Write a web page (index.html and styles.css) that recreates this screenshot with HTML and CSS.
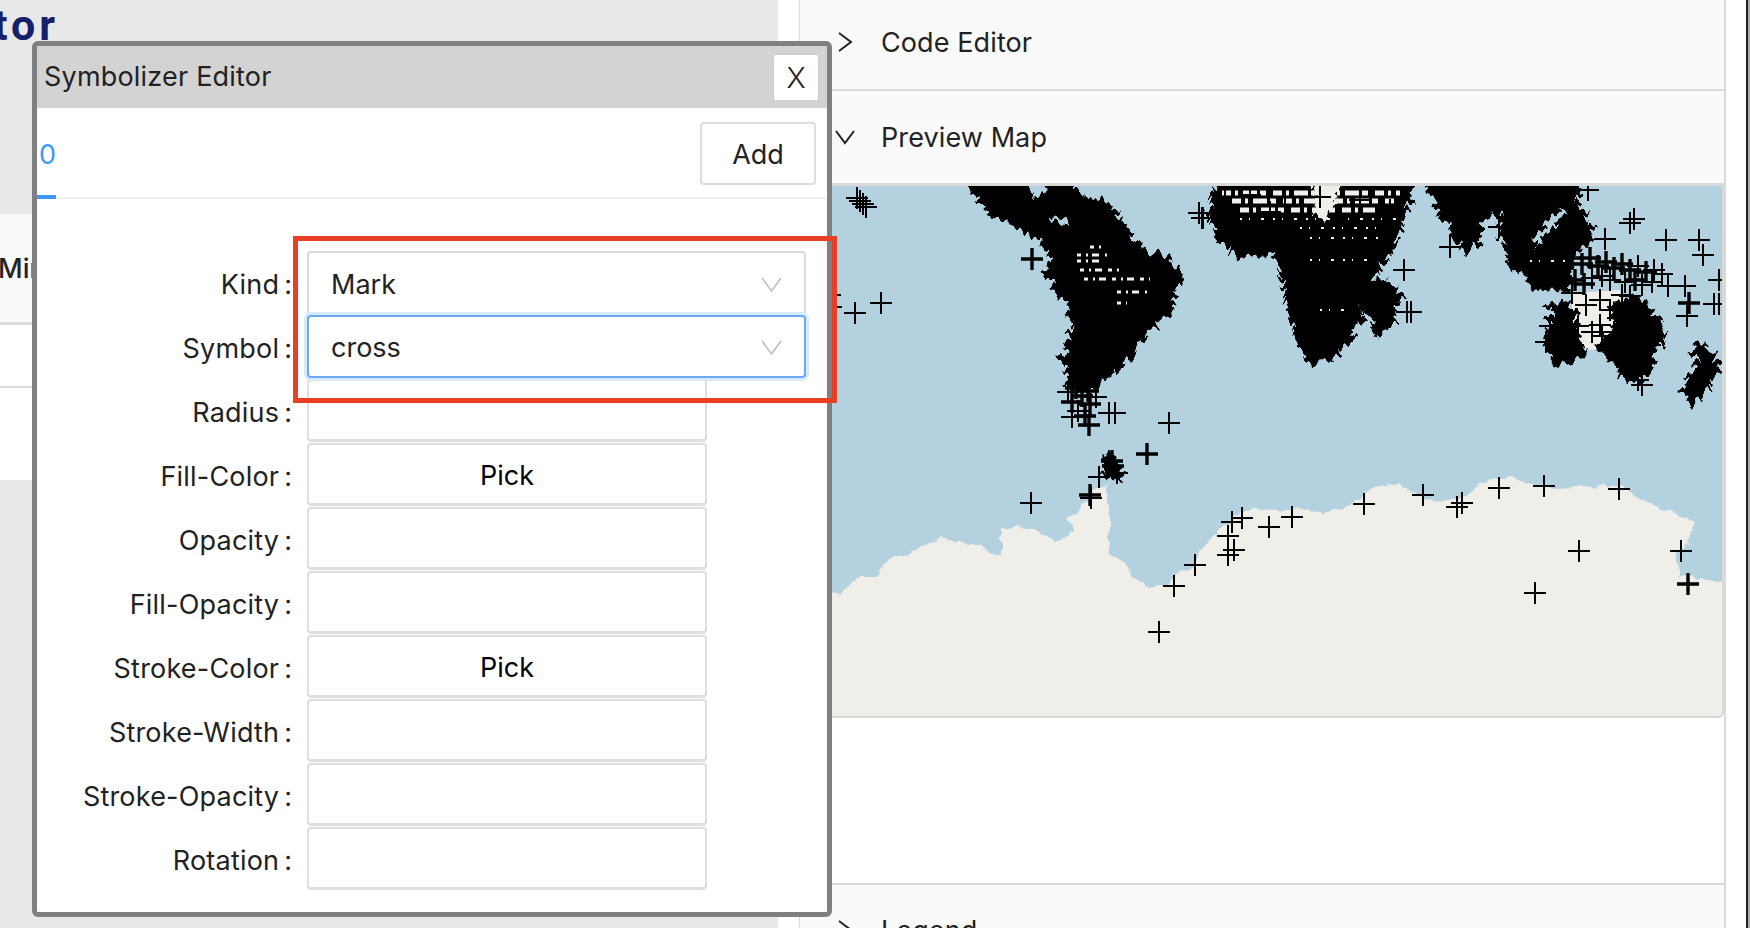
FILE: index.html
```html
<!DOCTYPE html>
<html lang="en">
<head>
<meta charset="utf-8">
<title>Symbolizer Editor</title>
<link rel="stylesheet" href="styles.css">
</head>
<body>
<div class="page">
  <div class="left">
    <div class="brand"><span class="brand-text">tor</span></div>
    <div class="thead"><span class="th">Min</span></div>
    <div class="trow"></div>
    <div class="trow-empty"></div>
    <div class="left-rest"></div>
  </div>
  <div class="gutter"></div>
  <div class="panel">
    <div class="head head-first">
      <svg class="chev" width="20" height="20" viewBox="0 0 20 20"><path d="M4 1l12 9L4 19"/></svg>
      <span>Code Editor</span>
    </div>
    <div class="head head-open">
      <svg class="chev" width="20" height="20" viewBox="0 0 20 20"><path d="M1 4l9 12 9-12"/></svg>
      <span>Preview Map</span>
    </div>
    <div class="map">
      <svg class="map-svg" width="922" height="531" viewBox="800 186 922 531">
        <defs>
          <path id="c" d="M0-11V11M-11 0H11"/>
          <path id="t" d="M0-11V11M-11 0H11" stroke-width="3.4"/>
          <filter id="rough" x="-2%" y="-5%" width="104%" height="110%">
            <feTurbulence type="fractalNoise" baseFrequency="0.07" numOctaves="3" seed="4"/>
            <feDisplacementMap in="SourceGraphic" scale="11" xChannelSelector="R" yChannelSelector="G"/>
          </filter>
          <filter id="jag" filterUnits="userSpaceOnUse" x="780" y="150" width="960" height="600" color-interpolation-filters="sRGB">
            <feTurbulence type="fractalNoise" baseFrequency="0.01 0.2" numOctaves="1" seed="7" result="nx"/>
            <feColorMatrix in="nx" type="matrix" values="1 0 0 0 0  0 0 0 0 .5  0 0 0 0 .5  0 0 0 0 1" result="mx"/>
            <feDisplacementMap in="SourceGraphic" in2="mx" scale="26" xChannelSelector="R" yChannelSelector="G" result="a"/>
            <feTurbulence type="fractalNoise" baseFrequency="0.2 0.01" numOctaves="1" seed="11" result="ny"/>
            <feColorMatrix in="ny" type="matrix" values="1 0 0 0 0  0 0 0 0 .5  0 0 0 0 .5  0 0 0 0 1" result="my"/>
            <feDisplacementMap in="a" in2="my" scale="20" xChannelSelector="G" yChannelSelector="R"/>
          </filter>
        </defs>
        <rect class="ocean" x="800" y="186" width="922" height="531"/>
        <path class="land land-coast" d="M790 585L832 592 844 595 859 577 876 577 888 558 915 553 939 538 980 547 989 555 1001 553 1001 528 1016 526 1039 533 1054 542 1075 530 1069 518 1084 503 1108 483 1108 553 1122 563 1140 583 1164 587 1194 563 1200 547 1217 533 1240 512 1262 508 1290 510 1324 512 1354 502 1380 487 1398 483 1413 492 1430 500 1449 503 1472 490 1490 480 1508 478 1535 486 1561 488 1603 485 1620 488 1638 498 1674 512 1697 523 1686 543 1677 553 1679 577 1698 578 1740 583V740H790Z"/>
        <path class="land" d="M1572 293L1620 290 1625 345 1590 350 1572 340Z"/>
        <g class="continents">
          <path class="mass" d="M968 165H1070V190L1072 194 1083 199 1107 207 1115 215 1118 225 1128 239 1140 252 1158 257 1171 267 1179 278 1175 287 1171 295 1170 307 1158 320 1148 331 1138 341 1125 358 1115 370 1103 378 1095 385H1072L1069 377 1067 360 1072 337 1075 313 1062 295 1049 270 1055 247 1039 235 1019 225 995 215 982 202Z"/>
          <path class="mass" d="M1225 165H1410V190L1400 223 1386 253 1372 277 1358 320 1347 340 1330 358 1312 360 1302 345 1295 327 1288 293 1284 270 1274 250 1242 255 1221 236 1212 217Z"/>
          <path class="mass" d="M1425 165H1578V188L1572 200 1587 223 1589 240 1572 250 1566 288 1533 285 1512 261 1505 240 1502 213 1491 210 1477 220 1477 237 1467 248 1453 230 1442 210Z"/>
          <path class="mass" d="M1386 283L1398 297 1389 321 1379 331 1370 313 1373 289Z"/>
          <path class="mass" d="M1632 300L1651 313 1661 333 1654 355 1639 380 1627 375 1612 358 1600 347 1616 333 1615 305Z"/>
          <path class="mass" d="M1553 309L1570 305 1575 330 1582 350 1570 358 1561 360 1548 347 1553 327Z"/>
          <path class="mass" d="M1705 347L1717 367 1705 385 1692 400 1685 390 1700 370 1697 353Z"/>
          <path class="mass mass-small" d="M1105 458L1112 455 1120 470 1118 478 1105 475Z"/>
          <path class="sea" d="M1023 165H1043V187L1040 195 1030 198ZM1056 215L1070 220 1068 228 1060 224ZM1561 208L1564 218 1550 232 1537 247 1537 238 1550 220Z"/>
          <path class="blob" d="M1312 175H1336L1334 205 1325 220 1315 212Z"/>
        </g>
        <g class="speck">
          <path d="M1090 247H1103"/><path d="M1077 255H1107"/><path d="M1077 261H1104"/><path d="M1080 270H1120"/>
          <path d="M1084 279H1150"/><path d="M1117 292H1147"/><path d="M1117 303H1127"/>
          <path class="speck-wide" d="M1222 193H1400"/><path class="speck-wide" d="M1232 201H1396"/><path class="speck-wide" d="M1240 210H1375"/>
          <path class="speck-fine" d="M1240 219H1400"/><path class="speck-fine" d="M1300 228H1380"/><path class="speck-fine" d="M1310 238H1380"/>
          <path class="speck-fine" d="M1310 260H1370"/><path class="speck-fine" d="M1320 310H1350"/>
          <path class="speck-fine" d="M1530 261H1570"/>
        </g>
        <g class="cross">
          <use href="#c" x="855" y="313"/><use href="#c" x="881" y="303"/><use href="#c" x="830" y="295"/><use href="#c" x="831" y="307"/>
          <use href="#t" x="1032" y="259"/><use href="#c" x="1109" y="413"/><use href="#c" x="1115" y="413"/><use href="#t" x="1089" y="425"/>
          <use href="#c" x="1169" y="423"/><use href="#t" x="1147" y="454"/>
          <use href="#c" x="857" y="198"/><use href="#c" x="860" y="201"/><use href="#c" x="863" y="204"/><use href="#c" x="866" y="207"/>
          <use href="#c" x="1199" y="213"/><use href="#c" x="1202" y="218"/>
          <use href="#t" x="1076" y="388"/><use href="#t" x="1088" y="391"/><use href="#t" x="1082" y="396"/><use href="#t" x="1072" y="402"/>
          <use href="#t" x="1090" y="404"/><use href="#c" x="1078" y="411"/><use href="#t" x="1085" y="416"/><use href="#c" x="1072" y="417"/>
          <use href="#c" x="1096" y="397"/><use href="#c" x="1068" y="392"/>
          <use href="#c" x="1031" y="503"/><use href="#c" x="1099" y="477"/><use href="#t" x="1090" y="495"/><use href="#c" x="1091" y="498"/>
          <use href="#t" x="1112" y="461"/><use href="#t" x="1113" y="466"/><use href="#c" x="1117" y="473"/>
          <use href="#c" x="1174" y="586"/><use href="#c" x="1159" y="632"/><use href="#c" x="1195" y="565"/><use href="#c" x="1228" y="555"/>
          <use href="#c" x="1228" y="536"/><use href="#c" x="1234" y="550"/><use href="#c" x="1232" y="522"/><use href="#c" x="1242" y="518"/>
          <use href="#c" x="1269" y="527"/><use href="#c" x="1292" y="517"/><use href="#c" x="1364" y="504"/><use href="#c" x="1423" y="495"/>
          <use href="#c" x="1457" y="507"/><use href="#c" x="1462" y="503"/><use href="#c" x="1499" y="488"/><use href="#c" x="1544" y="486"/>
          <use href="#c" x="1619" y="489"/><use href="#c" x="1579" y="551"/><use href="#c" x="1535" y="593"/><use href="#c" x="1681" y="551"/>
          <use href="#t" x="1688" y="584"/>
          <use href="#c" x="1404" y="270"/><use href="#c" x="1407" y="312"/><use href="#c" x="1411" y="312"/>
          <use href="#c" x="1634" y="219"/><use href="#c" x="1630" y="223"/><use href="#c" x="1605" y="239"/><use href="#c" x="1666" y="240"/>
          <use href="#c" x="1699" y="240"/><use href="#c" x="1703" y="255"/><use href="#c" x="1685" y="286"/><use href="#t" x="1689" y="303"/>
          <use href="#c" x="1687" y="316"/><use href="#c" x="1719" y="280"/><use href="#c" x="1714" y="304"/><use href="#c" x="1719" y="304"/>
          <use href="#c" x="1499" y="227"/><use href="#c" x="1450" y="247"/><use href="#c" x="1588" y="190"/><use href="#c" x="1203" y="218"/>
          <use href="#t" x="1572" y="258"/><use href="#t" x="1582" y="264"/><use href="#t" x="1590" y="258"/><use href="#t" x="1598" y="266"/>
          <use href="#t" x="1606" y="262"/><use href="#t" x="1614" y="268"/><use href="#t" x="1622" y="264"/><use href="#t" x="1630" y="270"/>
          <use href="#c" x="1638" y="266"/><use href="#t" x="1646" y="272"/><use href="#c" x="1654" y="270"/><use href="#c" x="1662" y="274"/>
          <use href="#c" x="1668" y="286"/><use href="#t" x="1575" y="280"/><use href="#t" x="1584" y="284"/><use href="#c" x="1592" y="278"/>
          <use href="#c" x="1625" y="282"/><use href="#t" x="1635" y="280"/><use href="#c" x="1642" y="285"/><use href="#c" x="1572" y="293"/>
          <use href="#c" x="1610" y="280"/><use href="#c" x="1602" y="276"/><use href="#c" x="1652" y="282"/>
          <use href="#c" x="1600" y="300"/><use href="#c" x="1586" y="305"/><use href="#c" x="1622" y="295"/><use href="#c" x="1630" y="296"/>
          <use href="#c" x="1610" y="310"/><use href="#c" x="1618" y="318"/><use href="#c" x="1600" y="325"/><use href="#c" x="1592" y="332"/>
          <use href="#c" x="1602" y="336"/><use href="#c" x="1578" y="326"/><use href="#c" x="1556" y="318"/><use href="#c" x="1562" y="310"/>
          <use href="#c" x="1550" y="326"/><use href="#c" x="1562" y="340"/><use href="#c" x="1570" y="345"/><use href="#c" x="1560" y="353"/>
          <use href="#c" x="1546" y="342"/><use href="#c" x="1640" y="320"/><use href="#c" x="1628" y="332"/><use href="#c" x="1614" y="332"/>
          <use href="#c" x="1638" y="380"/><use href="#c" x="1642" y="385"/><use href="#c" x="1650" y="345"/>
          <use href="#c" x="1225" y="197"/><use href="#c" x="1250" y="195"/><use href="#c" x="1285" y="205"/><use href="#c" x="1320" y="197"/>
          <use href="#c" x="1360" y="200"/><use href="#c" x="1390" y="210"/><use href="#c" x="1270" y="212"/><use href="#c" x="1340" y="215"/>
        </g>
      </svg>
    </div>
    <div class="panel-space"></div>
    <div class="head head-last">
      <svg class="chev" width="20" height="20" viewBox="0 0 20 20"><path d="M4 1l12 9L4 19"/></svg>
      <span>Legend</span>
    </div>
  </div>
  <div class="gutter-right"></div>
  <div class="scroll-edge"></div>
</div>

<div class="modal">
  <div class="modal-title">
    <span>Symbolizer Editor</span>
    <button class="close" type="button">X</button>
  </div>
  <div class="tabs">
    <div class="tab">0</div>
    <button class="btn-add" type="button">Add</button>
  </div>
  <form class="form">
    <div class="row"><label class="label">Kind<span class="colon">:</span></label>
      <div class="select"><span>Mark</span><svg class="sel-arrow" width="21" height="15" viewBox="0 0 21 15"><path d="M1 1l9.5 13L20 1"/></svg></div></div>
    <div class="row row-focus"><label class="label">Symbol<span class="colon">:</span></label>
      <div class="select select-focus"><span>cross</span><svg class="sel-arrow" width="21" height="15" viewBox="0 0 21 15"><path d="M1 1l9.5 13L20 1"/></svg></div></div>
    <div class="row"><label class="label">Radius<span class="colon">:</span></label><div class="field"></div></div>
    <div class="row"><label class="label">Fill-Color<span class="colon">:</span></label><div class="field field-pick">Pick</div></div>
    <div class="row"><label class="label">Opacity<span class="colon">:</span></label><div class="field"></div></div>
    <div class="row"><label class="label">Fill-Opacity<span class="colon">:</span></label><div class="field"></div></div>
    <div class="row"><label class="label">Stroke-Color<span class="colon">:</span></label><div class="field field-pick">Pick</div></div>
    <div class="row"><label class="label">Stroke-Width<span class="colon">:</span></label><div class="field"></div></div>
    <div class="row"><label class="label">Stroke-Opacity<span class="colon">:</span></label><div class="field"></div></div>
    <div class="row"><label class="label">Rotation<span class="colon">:</span></label><div class="field"></div></div>
  </form>
</div>
<div class="highlight"></div>
</body>
</html>
```

FILE: styles.css
```css
* { box-sizing: border-box; }
html, body { margin: 0; padding: 0; height: 928px; overflow: hidden; background: #fff; }
body { font-family: Inter, "Liberation Sans", sans-serif; font-size: 27px; color: #222; position: relative; }

.page { display: flex; width: 1750px; height: 928px; overflow: hidden; }

.left { width: 778px; height: 928px; display: flex; flex-direction: column; background: #e8e8e8; overflow: hidden; }
.brand { height: 214px; }
.brand-text { display: block; margin-left: -7px; font-family: Roboto, sans-serif; font-weight: 700; font-size: 43px; letter-spacing: 4px; line-height: 50px; color: #14206a; }
.thead { height: 111px; background: #fafafa; border-bottom: 3px solid #dcdcdc; display: flex; align-items: center; }
.th { margin-left: -2px; font-weight: 500; }
.trow { height: 63px; background: #fff; border-bottom: 2px solid #dcdcdc; }
.trow-empty { height: 92px; background: #fff; }
.left-rest { flex: 1; }

.gutter { width: 21px; background: #fff; }

.panel { width: 927px; height: 928px; flex: none; border-left: 1.5px solid #d9d9d9; border-right: 2px solid #d9d9d9; display: flex; flex-direction: column; overflow: hidden; }
.head { flex: none; height: 94px; background: #fafafa; border-bottom: 2px solid #d9d9d9; display: flex; align-items: center; padding-left: 35px; padding-bottom: 2px; letter-spacing: 0.1px; }
.head-first { margin-top: -3px; }
.head-open { height: 95px; border-bottom-width: 3px; padding-bottom: 0; }
.head-last { height: 94px; border-top: 2px solid #d9d9d9; border-bottom: 0; }
.chev { flex: none; margin-right: 26px; fill: none; stroke: #222; stroke-width: 2; }

.map { flex: none; height: 532px; width: 924px; border-right: 2px solid #d9d9d9; border-bottom: 2px solid #d9d9d9; border-bottom-right-radius: 6px; overflow: hidden; }
.map-svg { display: block; }
.ocean { fill: #b3d1de; }
.land { fill: #f0eee9; }
.land-coast { filter: url(#rough); }
.continents { filter: url(#jag); }
.sea { fill: #b3d1de; }
.blob { fill: #f0eee9; }
.mass { fill: #000; stroke: #000; stroke-width: 8; }
.mass-small { stroke-width: 5; }
.cross { fill: none; stroke: #000; stroke-width: 2; }
.speck { fill: none; stroke: #f3f0ec; stroke-width: 3; stroke-dasharray: 4 5 2 4 7 6; }
.speck-wide { stroke-width: 5; stroke-dasharray: 9 4 3 5 14 3 6 7; }
.speck-fine { stroke-width: 2; stroke-dasharray: 2 7 1 11 3 9; }
.panel-space { flex: none; height: 165px; background: #fff; }

.gutter-right { width: 20px; flex: none; background: #fff; }
.scroll-edge { width: 4px; flex: none; background: #aaa; border-left: 2px solid #222; }

.modal { position: absolute; left: 32px; top: 41px; width: 800px; height: 876px; background: #fff; border: 5px solid #808080; border-radius: 6px; display: flex; flex-direction: column; }
.modal-title { flex: none; height: 62px; background: #d3d3d3; display: flex; align-items: center; justify-content: space-between; padding: 0 9px 0 7px; letter-spacing: 0.2px; }
.modal-title span { margin-top: -2px; }
.close { width: 44px; height: 45px; border: 0; border-radius: 2px; background: #fff; box-shadow: 0 0 3px #c8c8c8; font-family: Inter, sans-serif; font-size: 29px; font-weight: 300; color: #222; padding: 0; }

.tabs { flex: none; height: 91px; border-bottom: 2px solid #f0f0f0; display: flex; align-items: flex-start; justify-content: space-between; padding-right: 11px; }
.tab { height: 91px; width: 19px; border-bottom: 4px solid #4096ff; color: #4096ff; padding-left: 2px; padding-top: 31px; line-height: 32px; }
.btn-add { margin-top: 14px; width: 116px; height: 63px; background: #fff; border: 2px solid #dedede; border-radius: 4px; font-family: Inter, sans-serif; font-size: 27px; color: #222; padding: 2px 0 0; }

.form { flex: none; padding-top: 52px; display: flex; flex-direction: column; }
.row { flex: none; height: 64px; display: flex; align-items: stretch; position: relative; }
.row-focus { z-index: 1; }
.label { flex: none; width: 255px; text-align: right; line-height: 68px; letter-spacing: 0.2px; color: #222; }
.colon { margin-left: 5px; letter-spacing: 0; }
.select { margin-left: 15px; width: 499px; height: 65px; background: #fff; border: 2px solid #dcdcdc; border-radius: 4px; display: flex; align-items: center; justify-content: space-between; padding: 2px 22px 0 22px; }
.select-focus { border-color: #69a9f5; height: 63px; box-shadow: 0 0 0 3px #d9e9fd; }
.sel-arrow { fill: none; stroke: #bfbfbf; stroke-width: 1.6; }
.field { margin-left: 15px; width: 400px; height: 63px; background: #fff; border: 2px solid #dfdfdf; border-bottom-width: 3px; border-radius: 4px; }
.field-pick { display: flex; align-items: center; justify-content: center; color: #000; padding-top: 2px; }

.highlight { position: absolute; left: 293px; top: 236px; width: 544px; height: 167px; border: 5px solid #ea3f25; }
```
